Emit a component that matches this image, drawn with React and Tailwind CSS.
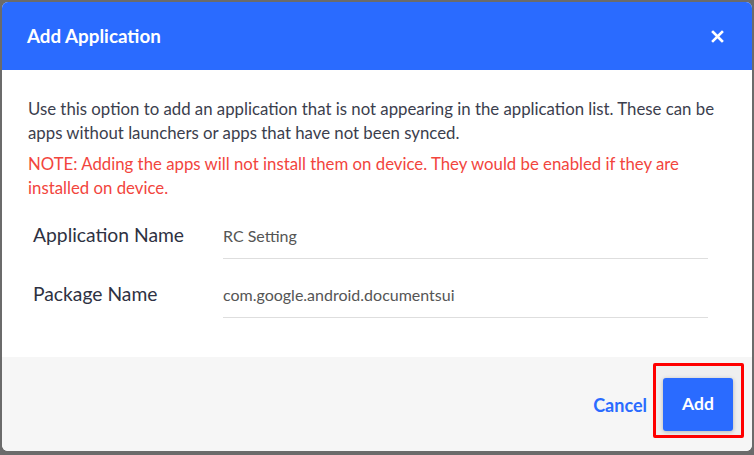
import React from "react";

function CloseIcon() {
  return (
    <svg width="13" height="13" viewBox="0 0 13 13" fill="none">
      <path d="M2 2L11 11M11 2L2 11" stroke="white" strokeWidth="2.6" strokeLinecap="square" />
    </svg>
  );
}

function Row({ label, value, className = "" }) {
  return (
    <div className={"flex items-stretch " + className}>
      <div className="w-[195px] pl-[5px] pb-[7px] flex items-center text-[19.3px] text-[#2e3142]">{label}</div>
      <div className="flex-1 mr-[18px] h-[41px] border-b border-[#dedede] flex items-center pb-[4px] text-[16px] text-[#555555]">
        {value}
      </div>
    </div>
  );
}

export default function App() {
  return (
    <div
      className="w-[754px] h-[455px] bg-[#6b6b6b] p-[2px]"
      style={{ fontFamily: '"Source Sans Pro", Lato, "Noto Sans", sans-serif' }}
    >
      <div className="w-[750px] h-[449px] bg-white rounded-[6px] overflow-hidden flex flex-col">
        <div className="h-[68px] shrink-0 bg-[#2a6bff] pl-[25px] pr-[28px] flex items-center justify-between">
          <div className="text-white text-[18.8px] font-bold">Add Application</div>
          <CloseIcon />
        </div>
        <div className="flex-1 px-[26px] pt-[27px]">
          <div className="text-[16.8px] leading-[24px] text-[#3b3e4d]">
            <div className="whitespace-nowrap">Use this option to add an application that is not appearing in the application list. These can be</div>
            <div className="whitespace-nowrap">apps without launchers or apps that have not been synced.</div>
          </div>
          <div className="mt-[7px] text-[16.8px] leading-[24px] text-[#f2453d]">
            <div className="whitespace-nowrap">NOTE: Adding the apps will not install them on device. They would be enabled if they are</div>
            <div className="whitespace-nowrap">installed on device.</div>
          </div>
          <Row className="mt-[18px]" label="Application Name" value="RC Setting" />
          <Row className="mt-[18px]" label="Package Name" value="com.google.android.documentsui" />
        </div>
        <div className="h-[94px] shrink-0 bg-[#f6f6f6] flex justify-end items-start pt-[6px] pr-[8px]">
          <button className="mt-[30px] mr-[6px] text-[18px] font-bold text-[#2a6bff] leading-[24px]">Cancel</button>
          <div className="border-[3px] border-[#ff0000] rounded-[2px] pl-[7px] pr-[8px] pt-[12px] pb-[4px] bg-[#efefef]">
            <button className="w-[70px] h-[53px] rounded-[3px] bg-[#2a6bff] text-white text-[17.5px] font-bold shadow-[0_1px_4px_rgba(0,0,0,0.25)]">
              Add
            </button>
          </div>
        </div>
      </div>
    </div>
  );
}
